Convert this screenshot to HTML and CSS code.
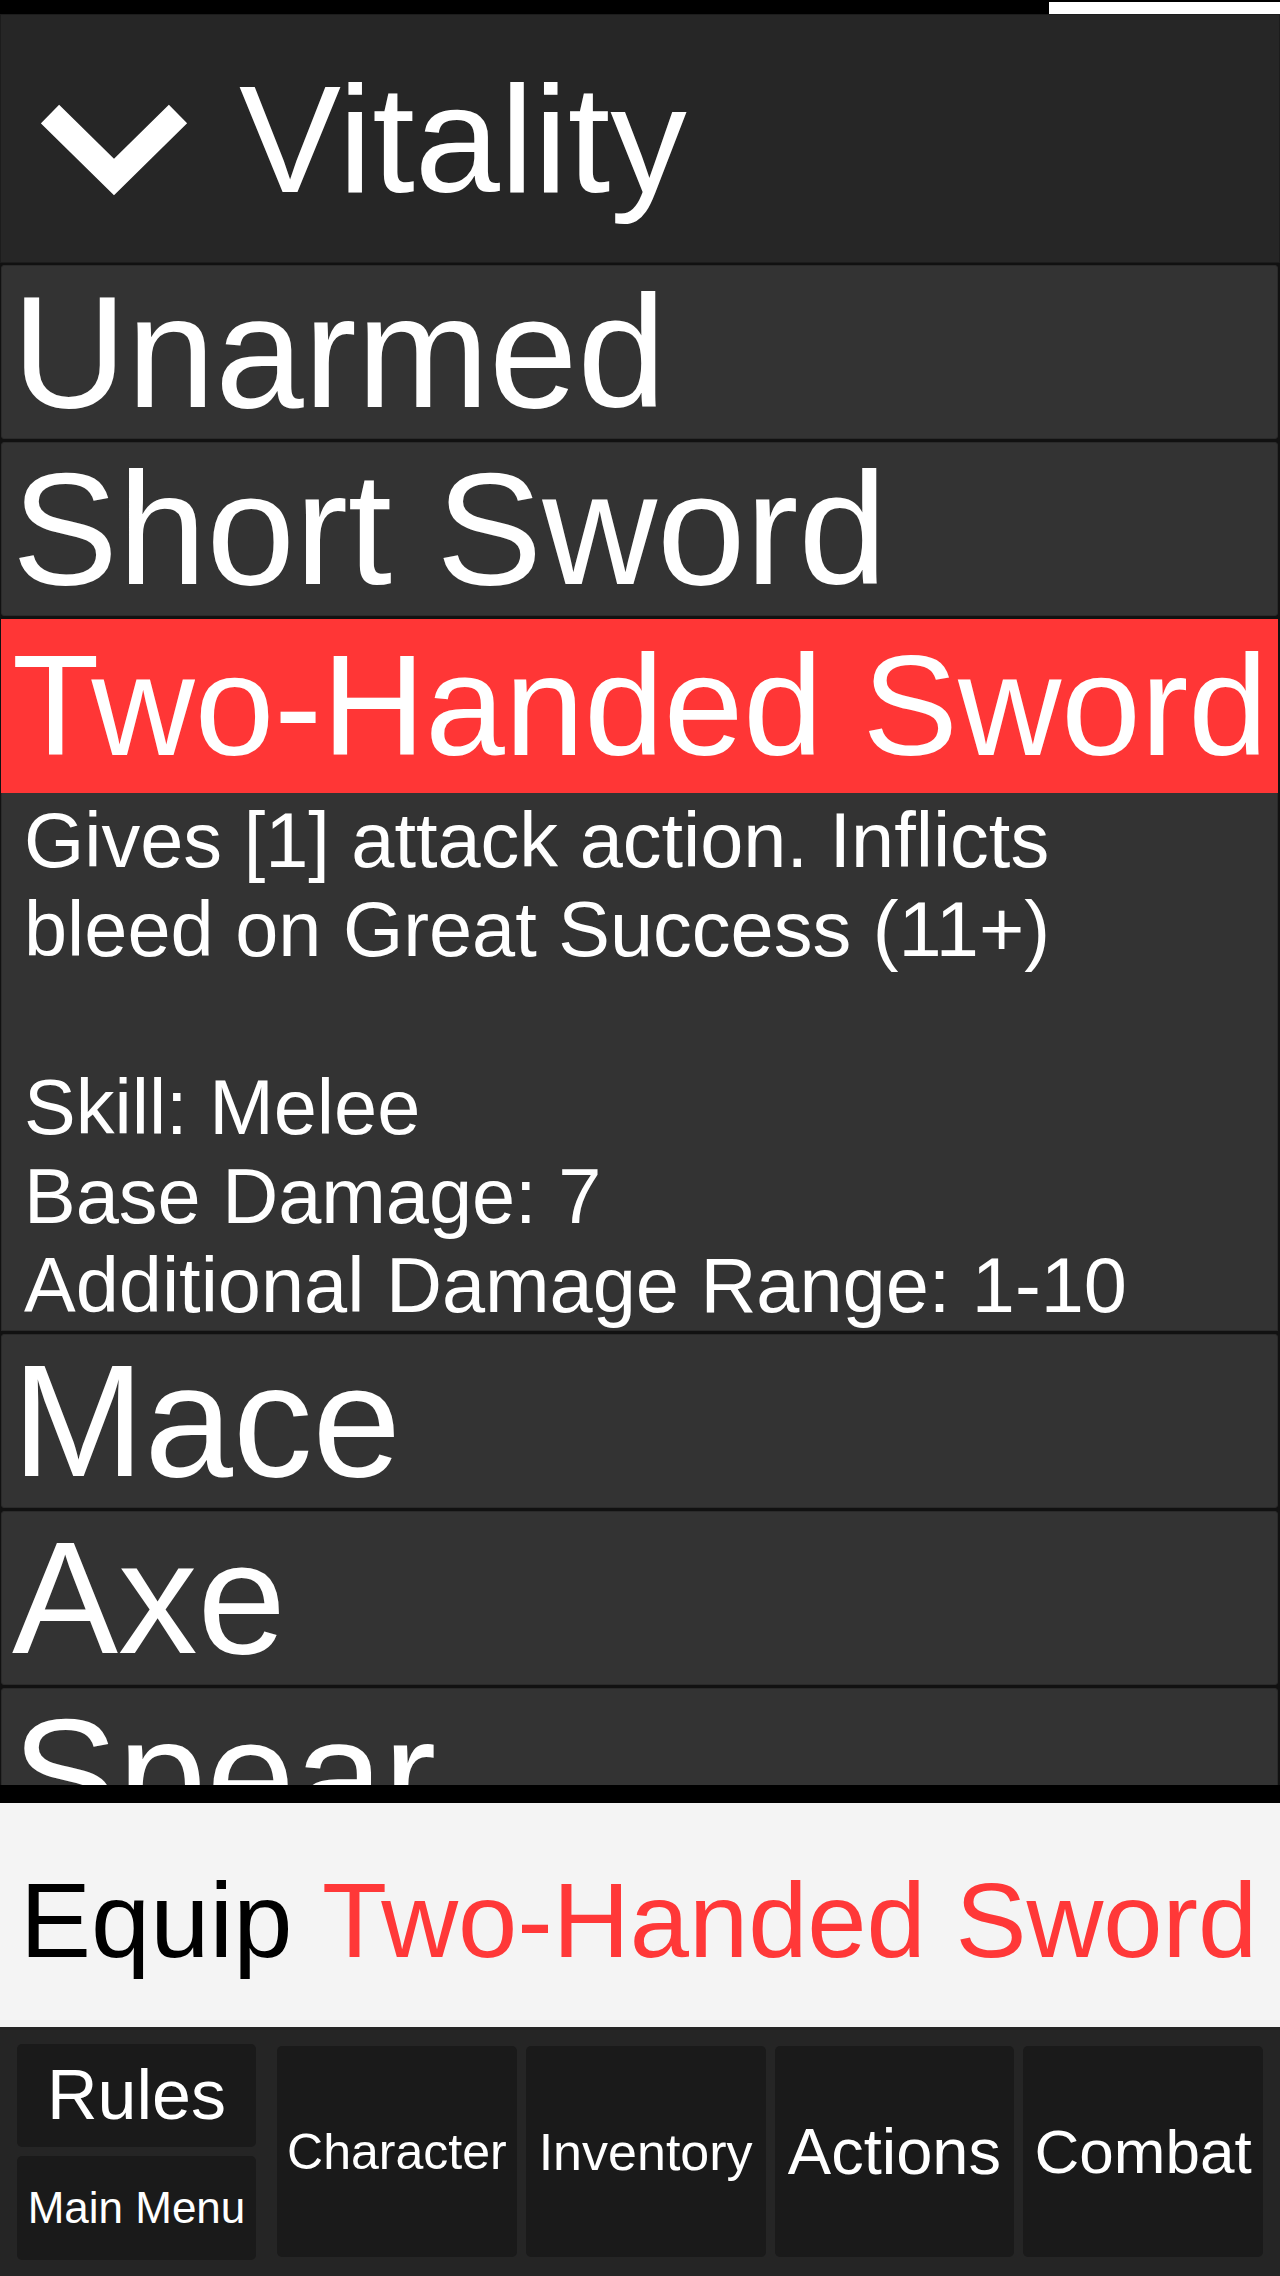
FILE: index.html
```html
<!DOCTYPE html>
<html lang="en">
<head>
  <meta charset="UTF-8">
  <title>Vitality</title>
  <link rel="stylesheet" href="styles.css">
</head>
<body>
<div class="topbar">
  <div class="tab-mark"></div>
</div>

<div class="list">
  <!-- 分组标题 -->
  <div class="group">
    <svg class="chevron" width="150" height="96" viewBox="0 0 150 96">
      <polyline points="9,10 73,73 137,10" fill="none" stroke="#fff" stroke-width="26" stroke-linejoin="miter"/>
    </svg>
    <span>Vitality</span>
  </div>

  <!-- 武器列表 -->
  <div class="item">Unarmed</div>
  <div class="item">Short Sword</div>
  <div class="item active">Two-Handed Sword</div>
  <div class="item-desc">
    Gives [1] attack action. Inflicts<br>
    bleed on Great Success (11+)<br>
    <br>
    Skill: Melee<br>
    Base Damage: 7<br>
    Additional Damage Range: 1-10
  </div>
  <div class="item">Mace</div>
  <div class="item">Axe</div>
  <div class="item">Spear</div>
</div>

<div class="equip">
  <span class="equip-label">Equip</span>&nbsp;<span class="equip-name">Two-Handed Sword</span>
</div>

<div class="nav">
  <div class="nav-side">
    <div class="nav-btn rules">Rules</div>
    <div class="nav-btn menu">Main Menu</div>
  </div>
  <div class="nav-btn tab t-character">Character</div>
  <div class="nav-btn tab t-inventory">Inventory</div>
  <div class="nav-btn tab t-actions">Actions</div>
  <div class="nav-btn tab t-combat">Combat</div>
</div>

</body>
</html>
```

FILE: styles.css
```css
body {
  margin: 0;
  padding: 0;
  background-color: #000;
  font-family: "Liberation Sans", Arial, sans-serif;
  color: #FFF;
}

.topbar {
  height: 14px;
  position: relative;
}

.tab-mark {
  position: absolute;
  right: 0;
  top: 2px;
  width: 231px;
  height: 12px;
  background-color: #FFF;
}

.list {
  height: 1771px;
  overflow: hidden;
  background-color: #111;
}

.group {
  height: 247px;
  display: flex;
  align-items: center;
  padding-left: 40px;
  background-color: #262626;
  border: 1px solid #1C1C1C;
  font-size: 153px;
  margin-bottom: 2px;
}

.group .chevron {
  margin-top: 26px;
  margin-right: 48px;
}

.item {
  height: 172px;
  line-height: 172px;
  padding-left: 10px;
  margin: 0 2px 3px 1px;
  background-color: #333;
  border: 1px solid #2A2A2A;
  border-radius: 3px;
  font-size: 159px;
  white-space: nowrap;
}

.item.active {
  background-color: #FF3636;
  border-color: #FF3636;
  font-size: 143px;
  margin-bottom: 0;
  border-radius: 0;
}

.item-desc {
  padding: 3px 10px 0 22px;
  margin: 0 2px 3px 1px;
  background-color: #333;
  border: 1px solid #2A2A2A;
  border-top: none;
  font-size: 77.5px;
  line-height: 89px;
}

.equip {
  margin-top: 18px;
  height: 224px;
  box-sizing: border-box;
  padding: 12px 0 0 20px;
  display: flex;
  align-items: center;
  background-color: #F4F4F4;
  font-size: 106.5px;
  white-space: nowrap;
}

.equip-label {
  color: #000;
}

.equip-name {
  color: #FF3838;
}

.nav {
  height: 249px;
  box-sizing: border-box;
  padding: 0 17px;
  display: flex;
  align-items: center;
  gap: 9px;
  background-color: #252525;
}

.nav-side {
  width: 239px;
  height: 216px;
  margin-right: 12px;
  display: flex;
  flex-direction: column;
  gap: 9px;
}

.nav-btn {
  display: flex;
  align-items: center;
  justify-content: center;
  background-color: #1A1A1A;
  border-radius: 5px;
  white-space: nowrap;
}

.nav-side .nav-btn {
  flex: 1;
}

.rules {
  font-size: 70px;
}

.menu {
  font-size: 44px;
}

.tab {
  flex: 1;
  height: 211px;
}

.t-character {
  font-size: 50px;
}

.t-inventory {
  font-size: 52px;
}

.t-actions {
  font-size: 65px;
}

.t-combat {
  font-size: 62px;
}
```
